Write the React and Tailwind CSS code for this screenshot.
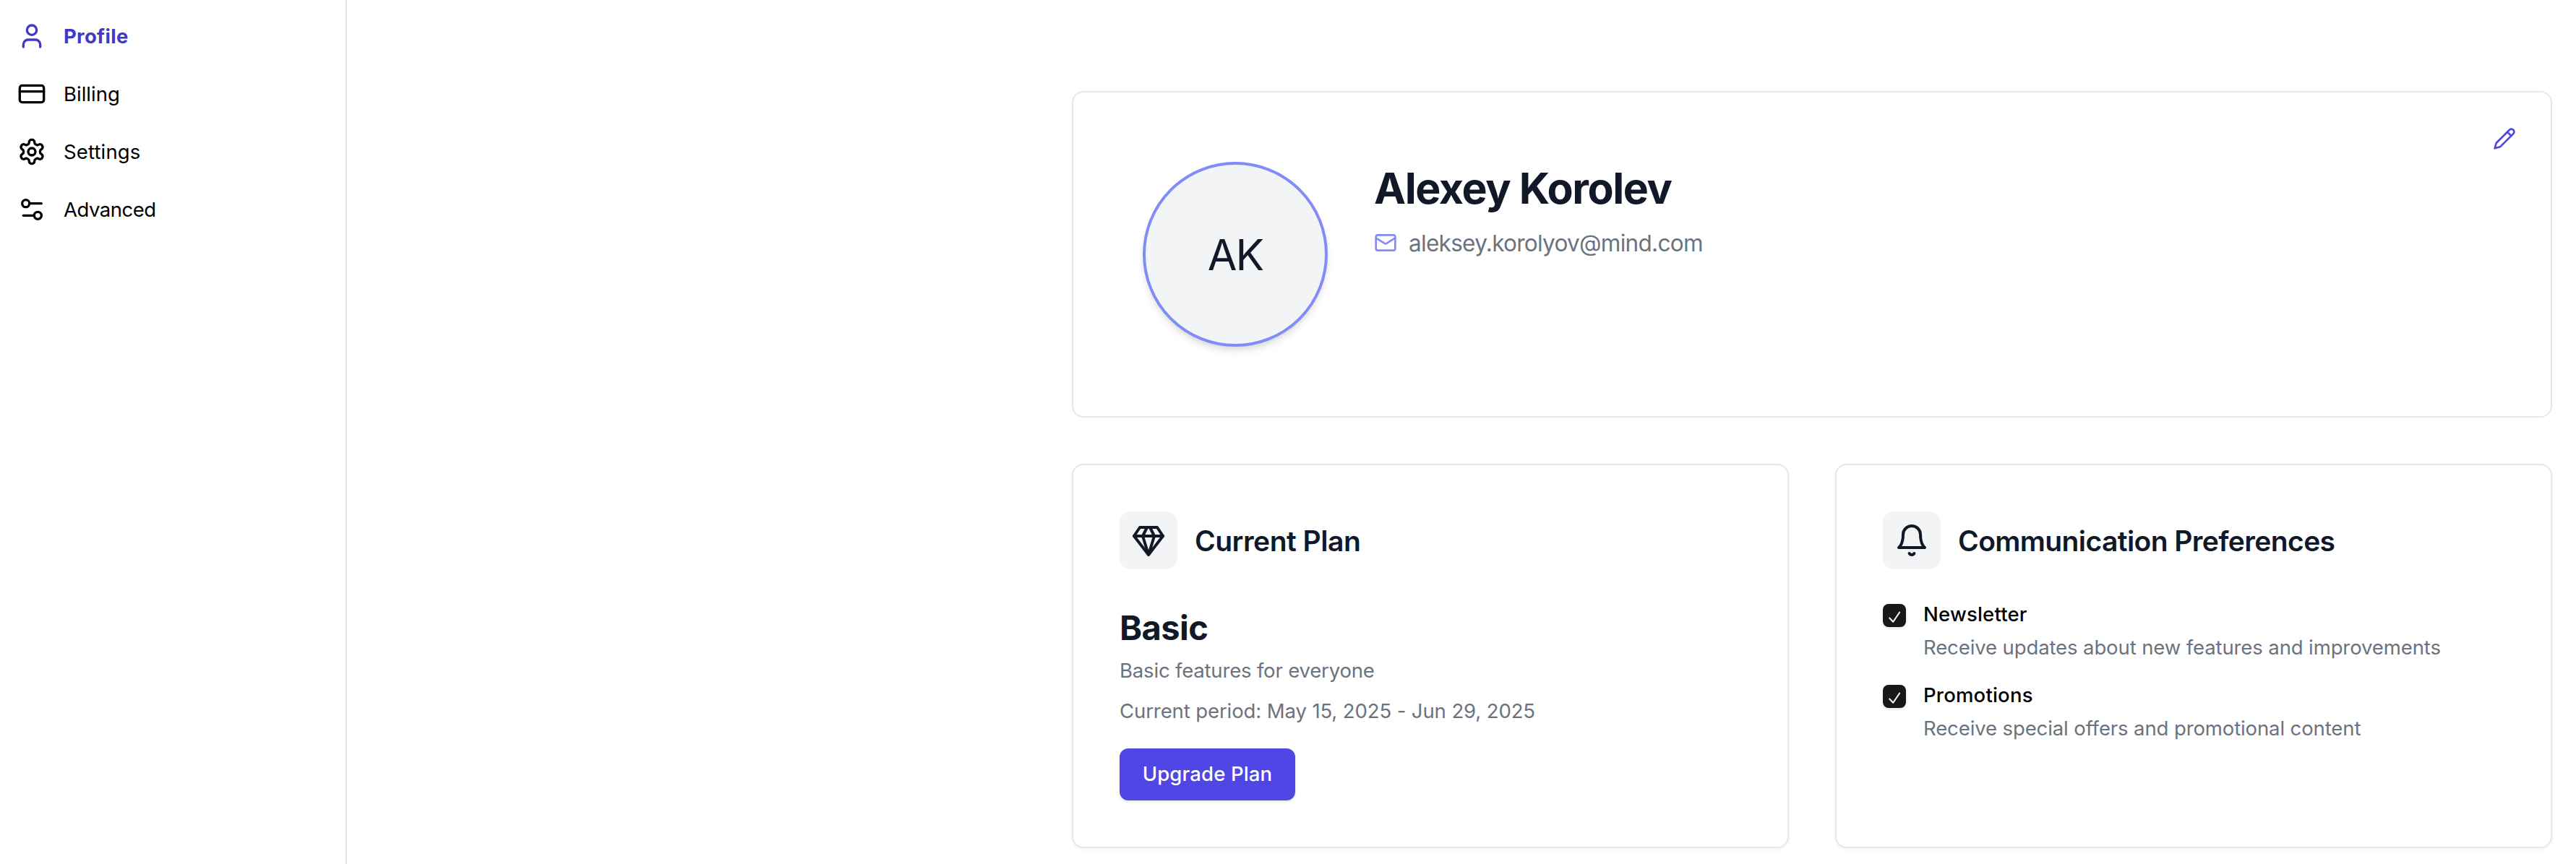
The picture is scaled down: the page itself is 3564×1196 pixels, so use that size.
function Icon({ className, strokeWidth = 2, children }) {
  return (
    <svg
      viewBox="0 0 24 24"
      fill="none"
      stroke="currentColor"
      strokeWidth={strokeWidth}
      strokeLinecap="round"
      strokeLinejoin="round"
      className={className}
    >
      {children}
    </svg>
  );
}

const navItems = [
  {
    label: 'Profile',
    className: 'font-bold text-[#4338ca] tracking-[0.3px]',
    icon: (
      <>
        <path d="M19 21v-2a4 4 0 0 0-4-4H9a4 4 0 0 0-4 4v2" />
        <circle cx="12" cy="7" r="4" />
      </>
    ),
  },
  {
    label: 'Billing',
    className: 'text-black tracking-[0px]',
    icon: (
      <>
        <rect width="20" height="14" x="2" y="5" rx="2" />
        <path d="M2 10h20" />
      </>
    ),
  },
  {
    label: 'Settings',
    className: 'text-black tracking-[0.15px]',
    icon: (
      <>
        <path d="M12.22 2h-.44a2 2 0 0 0-2 2v.18a2 2 0 0 1-1 1.73l-.43.25a2 2 0 0 1-2 0l-.15-.08a2 2 0 0 0-2.73.73l-.22.38a2 2 0 0 0 .73 2.73l.15.1a2 2 0 0 1 1 1.72v.51a2 2 0 0 1-1 1.74l-.15.09a2 2 0 0 0-.73 2.73l.22.38a2 2 0 0 0 2.73.73l.15-.08a2 2 0 0 1 2 0l.43.25a2 2 0 0 1 1 1.73V20a2 2 0 0 0 2 2h.44a2 2 0 0 0 2-2v-.18a2 2 0 0 1 1-1.73l.43-.25a2 2 0 0 1 2 0l.15.08a2 2 0 0 0 2.73-.73l.22-.39a2 2 0 0 0-.73-2.73l-.15-.08a2 2 0 0 1-1-1.74v-.5a2 2 0 0 1 1-1.74l.15-.09a2 2 0 0 0 .73-2.73l-.22-.38a2 2 0 0 0-2.73-.73l-.15.08a2 2 0 0 1-2 0l-.43-.25a2 2 0 0 1-1-1.73V4a2 2 0 0 0-2-2z" />
        <circle cx="12" cy="12" r="3" />
      </>
    ),
  },
  {
    label: 'Advanced',
    className: 'text-black tracking-[-0.5px]',
    icon: (
      <>
        <path d="M20 7h-9" />
        <path d="M14 17H5" />
        <circle cx="17" cy="17" r="3" />
        <circle cx="7" cy="7" r="3" />
      </>
    ),
  },
];

function Card({ children }) {
  return (
    <section className="h-[532px] rounded-2xl border-2 border-[#e5e7eb] bg-white p-16 shadow-[0_2px_4px_rgba(0,0,0,0.05)]">
      {children}
    </section>
  );
}

function CardHeader({ title, titleClassName, children }) {
  return (
    <div className="flex items-center gap-6">
      <div className="flex size-20 items-center justify-center rounded-2xl bg-[#f3f4f6]">
        <Icon className="size-12">{children}</Icon>
      </div>
      <h2 className={`whitespace-nowrap pt-0.5 text-[39px] font-semibold ${titleClassName}`}>{title}</h2>
    </div>
  );
}

function Preference({ label, description }) {
  return (
    <div className="flex gap-6">
      <div className="mt-1.5 size-8 rounded-lg bg-[#18181b] text-[#fafafa] shadow-[0_2px_4px_rgba(0,0,0,0.1)]">
        <Icon className="mt-1.5 ml-1 size-6">
          <path d="m5.2 13.5 5 5.3 9-13.3" />
        </Icon>
      </div>
      <div className="text-[27.5px] leading-10 whitespace-nowrap">
        <div className="font-medium tracking-[0.2px] text-black">{label}</div>
        <div className="mt-1.5 tracking-[-0.11px] text-[#6b7280]">{description}</div>
      </div>
    </div>
  );
}

export default function App() {
  return (
    <div className="flex h-[1196px] overflow-hidden bg-white font-['Inter',sans-serif] text-[#111827]">
      <aside className="w-[480px] shrink-0 border-r-2 border-[#e4e4e7] pt-2.5">
        <nav>
          {navItems.map((item) => (
            <a
              key={item.label}
              className={`flex h-20 items-center gap-6 pl-6 text-[27.5px] leading-10 ${item.className}`}
            >
              <Icon className="size-10">{item.icon}</Icon>
              {item.label}
            </a>
          ))}
        </nav>
      </aside>

      <main className="flex flex-1 justify-end pt-[126px] pr-[33px]">
        <div className="flex w-[2048px] flex-col gap-16">
          <section className="relative flex h-[452px] gap-16 rounded-2xl border-2 border-[#e5e7eb] bg-white p-24">
            <div className="flex size-64 items-center justify-center rounded-full border-4 border-[#818cf8] bg-[#f3f4f6] text-[59px] leading-none tracking-[-2px] shadow-[0_8px_12px_-2px_rgba(0,0,0,0.1),0_4px_8px_-4px_rgba(0,0,0,0.1)]">
              AK
            </div>
            <div className="whitespace-nowrap">
              <h1 className="text-[59px] leading-[73px] font-bold tracking-[-1.4px]">Alexey Korolev</h1>
              <div className="mt-[15px] flex h-12 items-center gap-4 text-[31.5px] tracking-[-0.7px] text-[#6b7280]">
                <Icon className="size-8 text-[#818cf8]">
                  <rect width="20" height="16" x="2" y="4" rx="2" />
                  <path d="m22 7-8.97 5.7a1.94 1.94 0 0 1-2.06 0L2 7" />
                </Icon>
                <span className="pt-px">aleksey.korolyov@mind.com</span>
              </div>
            </div>
            <button className="absolute top-12 right-12 text-[#4f46e5]">
              <Icon className="size-8">
                <path d="M17 3a2.85 2.83 0 1 1 4 4L7.5 20.5 2 22l1.5-5.5Z" />
                <path d="m15 5 4 4" />
              </Icon>
            </button>
          </section>

          <div className="grid grid-cols-2 gap-16">
            <Card>
              <CardHeader title="Current Plan" titleClassName="tracking-[-0.5px]">
                <path d="M6 3h12l4 6-10 13L2 9Z" />
                <path d="M11 3 8 9l4 13 4-13-3-6" />
                <path d="M2 9h20" />
              </CardHeader>
              <div className="mt-[49px] text-[47px] leading-[64px] font-bold tracking-[-0.55px]">Basic</div>
              <p className="mt-[7px] text-[27.5px] leading-10 tracking-[-0.18px] text-[#6b7280]">
                Basic features for everyone
              </p>
              <p className="mt-4 text-[27.5px] leading-10 tracking-[-0.1px] text-[#6b7280]">
                Current period: May 15, 2025 - Jun 29, 2025
              </p>
              <button className="mt-8 flex h-[72px] w-[243px] items-center justify-center rounded-xl bg-[#4f46e5] text-[27.5px] font-medium tracking-[0.15px] text-white shadow-[0_2px_4px_rgba(0,0,0,0.1)]">
                Upgrade Plan
              </button>
            </Card>
            <Card>
              <CardHeader title="Communication Preferences" titleClassName="tracking-[-0.6px]">
                <path d="M6 8a6 6 0 0 1 12 0c0 7 3 9 3 9H3s3-2 3-9" />
                <path d="M10.3 21a1.94 1.94 0 0 0 3.4 0" />
              </CardHeader>
              <div className="mt-[42px] flex flex-col gap-[26px]">
                <Preference label="Newsletter" description="Receive updates about new features and improvements" />
                <Preference label="Promotions" description="Receive special offers and promotional content" />
              </div>
            </Card>
          </div>
        </div>
      </main>
    </div>
  );
}
